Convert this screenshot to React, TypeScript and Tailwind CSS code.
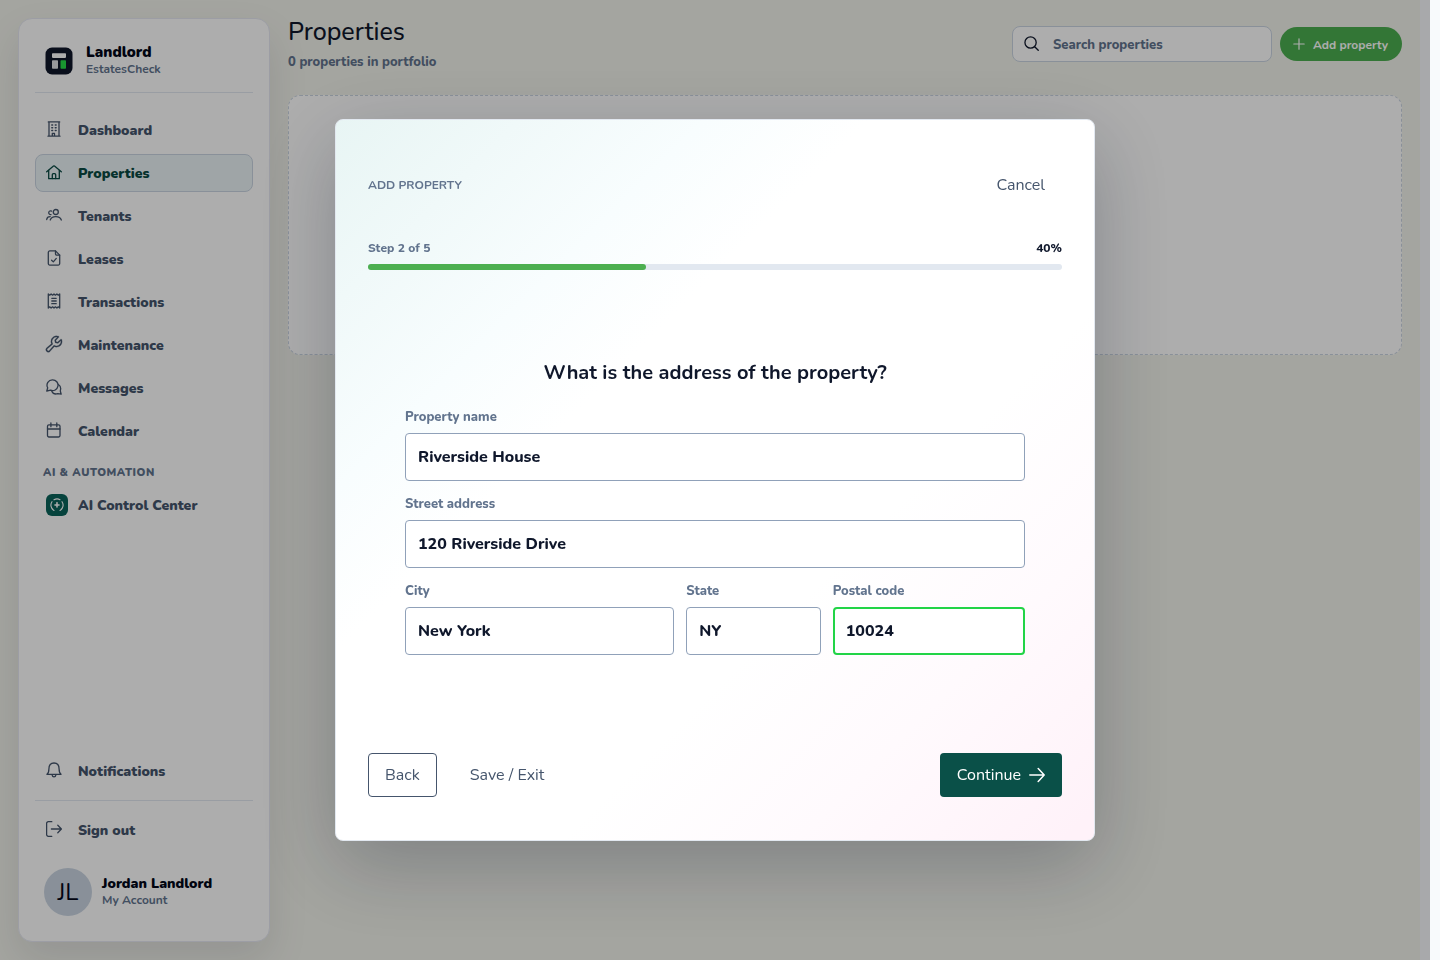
import type { ReactNode } from 'react'
import { PiWrench } from 'react-icons/pi'

type IconProps = { className?: string }

function Stroke({ className, children }: IconProps & { children: ReactNode }) {
  return (
    <svg
      viewBox="0 0 16 16"
      fill="none"
      stroke="currentColor"
      strokeWidth="1.3"
      strokeLinecap="round"
      strokeLinejoin="round"
      className={className}
      aria-hidden="true"
    >
      {children}
    </svg>
  )
}

const BuildingIcon = () => (
  <Stroke className="size-4">
    <path d="M2 15.200h12M3 15V1M13 15V1M2.300.9h11.400M6.300 15v-2.600h2.200V15" />
    <path d="M5.800 4h.8M9.300 4h.8M5.800 6.800h.8M9.300 6.800h.8M5.800 9.500h.8M9.300 9.500h.8" strokeWidth="1.500" />
  </Stroke>
)

const HomeIcon = () => (
  <Stroke className="size-4">
    <path d="M.7 7.800 7.500 2a.8.8 0 0 1 1 0l6.800 5.800" />
    <path d="M2.700 6.500v8.200h10.600V6.500" />
    <path d="M6.300 14.500v-3.800a1 1 0 0 1 1-1h1.400a1 1 0 0 1 1 1v3.800" />
  </Stroke>
)

const TenantsIcon = () => (
  <Stroke className="size-4">
    <circle cx="9.800" cy="5" r="2.500" />
    <path d="M4.200 13c.7-2.200 2.900-3.400 5.600-3.400s4.900 1.200 5.500 3.400" />
    <path d="M5.600 4.100a1.900 1.900 0 1 0-.6 3.500" />
    <path d="M4.200 9.600C2.300 9.600.9 10.700.7 12.500" />
  </Stroke>
)

const LeaseIcon = () => (
  <Stroke className="size-4">
    <path d="M9.500.9H3.800a1.500 1.500 0 0 0-1.500 1.500v11.200a1.500 1.500 0 0 0 1.500 1.500h8.400a1.500 1.500 0 0 0 1.500-1.500V5.100z" />
    <path d="M9.500.9v3.200a1 1 0 0 0 1 1h3.200" />
    <path d="m5.600 10.300 1.700 1.600 3-3.500" />
  </Stroke>
)

const ReceiptIcon = () => (
  <Stroke className="size-4">
    <path d="M2.300 1l1.400 1.200L5.100 1l1.500 1.200L8 1l1.400 1.200L10.900 1l1.400 1.200L13.700 1v14l-1.400-1.200-1.400 1.200-1.500-1.200L8 15l-1.400-1.200L5.100 15l-1.400-1.200L2.300 15z" />
    <path d="M5.800 5.300h4.400M5.800 8h4.400M5.800 10.700h4.400" />
  </Stroke>
)

const WrenchIcon = () => <PiWrench className="-m-0.5 size-5 shrink-0" strokeWidth="3" />

const MessagesIcon = () => (
  <Stroke className="size-4">
    <path d="M6.600.8a5.400 5.400 0 1 1-2 10.400L.8 12l.9-3.200A5.400 5.400 0 0 1 6.600.8z" />
    <path d="M12.400 5.500c1.500.9 2.400 2.400 2.300 4.200l-.4 2.300.9 3.200-3.400-.6c-2.500.9-4.800.1-6-2.400" />
  </Stroke>
)

const CalendarIcon = () => (
  <Stroke className="size-4">
    <rect x="1.500" y="2.800" width="12.500" height="12.200" rx="1.400" />
    <path d="M1.500 7H14M4.900.9v3.800M10.800.9v3.800" />
  </Stroke>
)

const BellIcon = () => (
  <Stroke className="size-4">
    <path d="M.9 12.300c1.600-.9 2-2.300 2-5.300C2.900 3.300 5 1 8 1s5.100 2.300 5.100 6c0 3 .4 4.400 2 5.300z" />
    <path d="M6 12.600c.2 1.500 1 2.200 2 2.200s1.800-.7 2-2.200" />
  </Stroke>
)

const SignOutIcon = () => (
  <Stroke className="size-4">
    <path d="M5.800.7H2.300A1.700 1.700 0 0 0 .6 2.400v11.200a1.700 1.700 0 0 0 1.700 1.700h3.500" />
    <path d="M5.400 8h10M11.800 4.300 15.400 8l-3.600 3.700" />
  </Stroke>
)

const AiIcon = () => (
  <span className="flex size-[22px] items-center justify-center rounded-md bg-[#09645b] text-white">
    <Stroke className="size-4">
      <path d="M5 13.400A6 6 0 0 1 3 4.700M5 2.800a6 6 0 0 1 6-.1M13 4.700a6 6 0 0 1-2 8.700" strokeWidth="1.100" />
      <path d="M8 5.400c.3 1.700 1 2.300 2.600 2.600C9 8.300 8.300 9 8 10.600 7.700 9 7 8.300 5.400 8 7 7.700 7.700 7.100 8 5.400z" fill="currentColor" strokeWidth=".8" />
    </Stroke>
  </span>
)

const LogoIcon = () => (
  <svg viewBox="0 0 28 28" className="size-7" aria-hidden="true">
    <rect x=".5" y=".5" width="27" height="27" rx="6.500" fill="#0f172a" />
    <rect x="7" y="6.300" width="14" height="4.600" rx=".8" fill="#fff" />
    <rect x="7" y="13.300" width="6" height="8.400" rx=".8" fill="#e2e2e6" />
    <rect x="15.500" y="13.300" width="5.500" height="8.400" rx=".8" fill="#26dd48" />
  </svg>
)

const navItems = [
  { label: 'Dashboard', icon: BuildingIcon },
  { label: 'Properties', icon: HomeIcon, active: true },
  { label: 'Tenants', icon: TenantsIcon },
  { label: 'Leases', icon: LeaseIcon },
  { label: 'Transactions', icon: ReceiptIcon },
  { label: 'Maintenance', icon: WrenchIcon },
  { label: 'Messages', icon: MessagesIcon },
  { label: 'Calendar', icon: CalendarIcon },
]

function NavItem({ label, active, children }: { label: string; active?: boolean; children: ReactNode }) {
  return (
    <a
      href="#"
      className={`flex h-[38px] items-center gap-2.5 rounded-lg border px-2.5 text-sm font-black ${
        active ? 'border-slate-300 bg-[#ebf3f7] text-[#0a4a43]' : 'border-transparent text-slate-600'
      }`}
    >
      <span className="flex w-[22px] items-center pb-0.5">{children}</span>
      <span className="pt-0.5">{label}</span>
    </a>
  )
}

function Sidebar() {
  return (
    <aside className="flex w-[252px] shrink-0 flex-col rounded-[14px] border border-[#e6e8f2] bg-white p-4 pb-[25px] shadow-[0_18px_40px_rgba(15,23,42,0.1)]">
      <div className="flex items-center gap-[13px] border-b border-slate-200 pt-[9px] pb-3.5 pl-2.5">
        <LogoIcon />
        <div>
          <div className="text-[15px] leading-[17px] font-black text-slate-950">Landlord</div>
          <div className="text-xs leading-[17px] font-bold text-slate-500">EstatesCheck</div>
        </div>
      </div>

      <nav className="mt-[18px] flex flex-col gap-[5px]">
        {navItems.map(({ label, icon: Icon, active }) => (
          <NavItem key={label} label={label} active={active}>
            <Icon />
          </NavItem>
        ))}
      </nav>

      <div className="mt-[15px] mb-[5px] pl-2 text-[11px] leading-4 font-black tracking-wider text-slate-500">
        AI &amp; AUTOMATION
      </div>
      <a href="#" className="flex h-[38px] items-center gap-2.5 px-[11px] text-sm font-black text-slate-600">
        <AiIcon />
        <span className="pt-0.5">AI Control Center</span>
      </a>

      <div className="mt-auto">
        <NavItem label="Notifications">
          <BellIcon />
        </NavItem>
        <div className="mt-2.5 border-t border-slate-200 pt-2.5">
          <NavItem label="Sign out">
            <SignOutIcon />
          </NavItem>
        </div>
        <div className="mt-[19px] flex items-center gap-2.5 pl-[9px]">
          <div className="flex size-12 items-center justify-center rounded-full bg-slate-300 text-2xl text-slate-950">
            JL
          </div>
          <div>
            <div className="text-sm leading-[17px] font-black text-slate-950">Jordan Landlord</div>
            <div className="text-xs leading-[17px] font-bold text-slate-500">My Account</div>
          </div>
        </div>
      </div>
    </aside>
  )
}

function Field({ id, label, value, focused }: { id: string; label: string; value: string; focused?: boolean }) {
  return (
    <div className="min-w-0">
      <label htmlFor={id} className="mb-1.5 block text-[13px] leading-5 font-extrabold text-slate-500">
        {label}
      </label>
      <input
        id={id}
        type="text"
        defaultValue={value}
        className={`h-12 w-full rounded bg-white text-base font-extrabold text-slate-900 outline-none ${
          focused ? 'border-2 border-[#22d447] px-[11px]' : 'border border-slate-400 px-3'
        }`}
      />
    </div>
  )
}

function AddPropertyDialog() {
  return (
    <div
      role="dialog"
      aria-modal="true"
      aria-labelledby="dialog-title"
      className="w-full max-w-[760px] rounded-lg border border-slate-200 bg-[linear-gradient(135deg,#e8f5f4_0%,#f8fdfe_25%,#ffffff_36%,#ffffff_64%,#fffafd_80%,#fff2f9_98%)] px-8 py-[43px] shadow-[0_24px_80px_rgba(15,23,42,0.26)]"
    >
      <div className="flex h-11 items-center justify-between">
        <div className="text-xs font-bold text-slate-500">ADD PROPERTY</div>
        <button type="button" className="h-11 px-[17px] text-base text-slate-600">Cancel</button>
      </div>

      {/* Progress */}
      <div className="mt-[33px]">
        <div className="flex justify-between text-xs font-extrabold text-slate-500">
          <span>Step 2 of 5</span>
          <span className="text-slate-900">40%</span>
        </div>
        <div className="mt-2 h-1.5 rounded-full bg-slate-200">
          <div className="h-full w-2/5 rounded-full bg-[#4caf50]" />
        </div>
      </div>

      {/* Address form */}
      <form className="mx-auto mt-[87px] max-w-[620px]">
        <h2 id="dialog-title" className="text-center text-xl leading-8 font-bold text-slate-900">
          What is the address of the property?
        </h2>
        <div className="mt-[18px] grid gap-[13px]">
          <Field id="property-name" label="Property name" value="Riverside House" />
          <Field id="street" label="Street address" value="120 Riverside Drive" />
          <div className="grid grid-cols-[1.4fr_0.7fr_1fr] gap-3">
            <Field id="city" label="City" value="New York" />
            <Field id="state" label="State" value="NY" />
            <Field id="postal" label="Postal code" value="10024" focused />
          </div>
        </div>
      </form>

      <div className="mt-[98px] flex items-center gap-4 text-base text-slate-600">
        <button type="button" className="h-11 rounded border border-slate-600 bg-white px-4">Back</button>
        <button type="button" className="h-11 px-[17px]">Save / Exit</button>
        <button type="button" className="ml-auto flex h-11 items-center gap-2 rounded bg-[#0a5048] px-[17px] text-white">
          Continue
          <svg viewBox="0 0 16 16" fill="none" stroke="currentColor" strokeWidth="1.500" strokeLinecap="round" strokeLinejoin="round" className="size-4" aria-hidden="true">
            <path d="M.8 8h14.400M9.200 1.500 15.200 8l-6 6.500" />
          </svg>
        </button>
      </div>
    </div>
  )
}

export default function App() {
  return (
    <div className="min-h-screen bg-slate-50 pr-2.5 font-[Nunito,sans-serif]">
      <div className="pr-2.5">
        <div className="flex min-h-screen gap-[18px] bg-[#f2f3ec] p-[18px]">
          <Sidebar />

          <main className="min-w-0 flex-1">
            <header className="flex items-center justify-between">
              <div>
                <h1 className="text-[25px] leading-7 font-medium text-slate-900">Properties</h1>
                <p className="mt-2 text-[13px] leading-4 font-extrabold text-slate-500">0 properties in portfolio</p>
              </div>
              <div className="flex items-center gap-2">
                <label className="flex h-9 w-[260px] items-center gap-3.5 rounded-lg border border-slate-300 bg-white px-[11px]">
                  <svg viewBox="0 0 16 16" fill="none" stroke="currentColor" strokeWidth="1.400" strokeLinecap="round" className="mb-0.5 size-[15px] shrink-0 text-slate-900" aria-hidden="true">
                    <circle cx="7" cy="7" r="6" />
                    <path d="m11.400 11.400 3.800 3.800" />
                  </svg>
                  <input
                    type="search"
                    aria-label="Search properties"
                    placeholder="Search properties"
                    className="w-full min-w-0 bg-transparent pt-[3px] text-[13px] font-extrabold outline-none placeholder:text-slate-500"
                  />
                </label>
                <button type="button" className="flex h-[34px] min-w-[122px] items-center gap-2 rounded-full bg-[#4caf50] px-[13px] text-xs font-bold text-white">
                  <svg viewBox="0 0 12 12" fill="none" stroke="currentColor" strokeWidth="1.200" strokeLinecap="round" className="size-3" aria-hidden="true">
                    <path d="M6 .8v10.400M.8 6h10.400" />
                  </svg>
                  <span className="pt-0.5">Add property</span>
                </button>
              </div>
            </header>

            <div className="mt-[25px] h-[260px] rounded-xl border border-dashed border-slate-300 bg-white" />
          </main>
        </div>
      </div>

      {/* Modal */}
      <div className="fixed inset-y-0 right-2.5 left-0 flex items-center justify-center overflow-auto bg-black/32">
        <AddPropertyDialog />
      </div>
    </div>
  )
}
